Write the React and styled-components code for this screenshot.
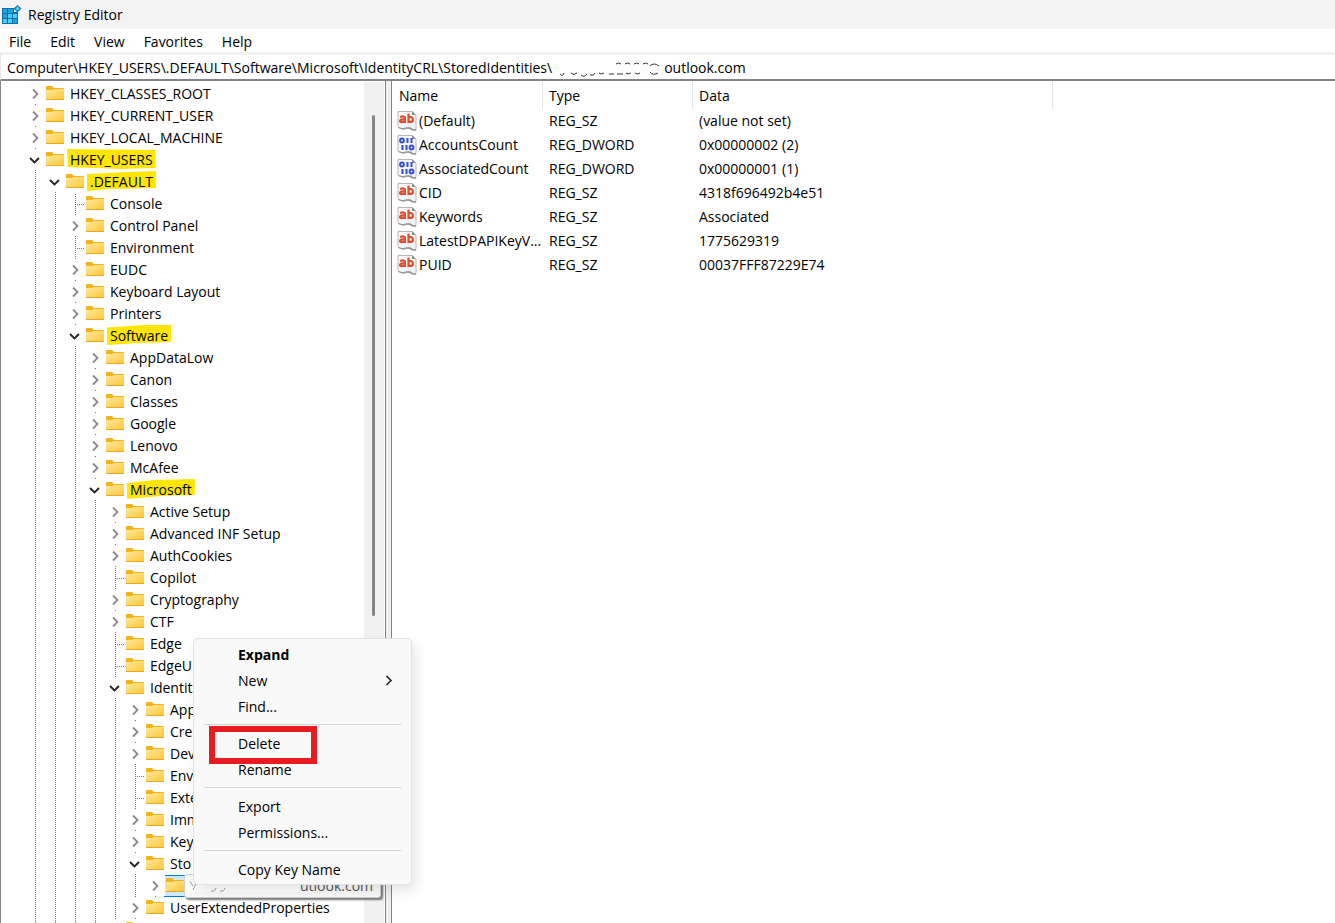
import styled, { createGlobalStyle } from "styled-components";

const GlobalStyle = createGlobalStyle`
  *, *::before, *::after {
    box-sizing: border-box;
  }
  body {
    margin: 0;
    background: #fff;
    color: #000;
    font-family: "Open Sans", "Segoe UI", sans-serif;
    font-size: 14px;
    line-height: 20px;
  }
  button, input {
    font: inherit;
    color: inherit;
  }
`

const menus = ["File", "Edit", "View", "Favorites", "Help"]

const keys = [
  { level: 0, name: "HKEY_CLASSES_ROOT", state: "closed" },
  { level: 0, name: "HKEY_CURRENT_USER", state: "closed" },
  { level: 0, name: "HKEY_LOCAL_MACHINE", state: "closed" },
  { level: 0, name: "HKEY_USERS", state: "open", marker: "0 0, 100% 5%, 100% 95%, 60% 100%, 1% 90%" },
  { level: 1, name: ".DEFAULT", state: "open", marker: "0 15%, 60% 5%, 100% 0, 100% 85%, 30% 90%, 0 100%" },
  { level: 2, name: "Console", state: "leaf" },
  { level: 2, name: "Control Panel", state: "closed" },
  { level: 2, name: "Environment", state: "leaf" },
  { level: 2, name: "EUDC", state: "closed" },
  { level: 2, name: "Keyboard Layout", state: "closed" },
  { level: 2, name: "Printers", state: "closed" },
  { level: 2, name: "Software", state: "open", marker: "0 12%, 60% 0, 100% 0, 100% 85%, 50% 90%, 0 100%" },
  { level: 3, name: "AppDataLow", state: "closed" },
  { level: 3, name: "Canon", state: "closed" },
  { level: 3, name: "Classes", state: "closed" },
  { level: 3, name: "Google", state: "closed" },
  { level: 3, name: "Lenovo", state: "closed" },
  { level: 3, name: "McAfee", state: "closed" },
  { level: 3, name: "Microsoft", state: "open", marker: "0 20%, 40% 5%, 100% 0, 100% 80%, 50% 85%, 0 100%" },
  { level: 4, name: "Active Setup", state: "closed" },
  { level: 4, name: "Advanced INF Setup", state: "closed" },
  { level: 4, name: "AuthCookies", state: "closed" },
  { level: 4, name: "Copilot", state: "leaf" },
  { level: 4, name: "Cryptography", state: "closed" },
  { level: 4, name: "CTF", state: "closed" },
  { level: 4, name: "Edge", state: "leaf" },
  { level: 4, name: "EdgeU", state: "leaf" },
  { level: 4, name: "Identit", state: "open" },
  { level: 5, name: "App", state: "closed" },
  { level: 5, name: "Cre", state: "closed" },
  { level: 5, name: "Dev", state: "closed" },
  { level: 5, name: "Env", state: "leaf" },
  { level: 5, name: "Exte", state: "leaf" },
  { level: 5, name: "Imm", state: "closed" },
  { level: 5, name: "Key", state: "closed" },
  { level: 5, name: "Sto", state: "open" },
  { level: 6, name: "", state: "closed", selected: true },
  { level: 5, name: "UserExtendedProperties", state: "closed" },
  { level: 4, name: "", state: "closed" },
]

const values = [
  { name: "(Default)", type: "REG_SZ", data: "(value not set)" },
  { name: "AccountsCount", type: "REG_DWORD", data: "0x00000002 (2)" },
  { name: "AssociatedCount", type: "REG_DWORD", data: "0x00000001 (1)" },
  { name: "CID", type: "REG_SZ", data: "4318f696492b4e51" },
  { name: "Keywords", type: "REG_SZ", data: "Associated" },
  { name: "LatestDPAPIKeyV...", type: "REG_SZ", data: "1775629319" },
  { name: "PUID", type: "REG_SZ", data: "00037FFF87229E74" },
]

const commands = [
  [{ label: "Expand", strong: true }, { label: "New", submenu: true }, { label: "Find..." }],
  [{ label: "Delete", boxed: true }, { label: "Rename" }],
  [{ label: "Export" }, { label: "Permissions..." }],
  [{ label: "Copy Key Name" }],
]

const AppIcon = () => (
  <svg width="20" height="20" viewBox="0 0 20 20" aria-hidden="true">
    <path d="M0 3h12v4h4v12H0z" fill="#0a6fa8" />
    <path d="M1 4h4v4H1zM6 4h5v4H6zM1 9h4v4H1zM11 14h4v4h-4z" fill="#1fa4dd" />
    <path d="M6 9h4v4H6zM11 9h4v4h-4zM1 14h4v4H1zM6 14h4v4H6z" fill="#50cdf5" />
    <path d="M15.500 0l4 3.500-4 4-4-4z" fill="#1480b8" />
    <path d="M15.500 1.500l2 2-2 2-2-2z" fill="#5fd0f5" />
  </svg>
)

const FolderIcon = () => (
  <svg width="18" height="16" viewBox="0 0 18 16" aria-hidden="true">
    <defs>
      <linearGradient id="folder" x1="0" y1="0" x2="1" y2="1">
        <stop offset="0" stopColor="#ffe8a0" />
        <stop offset="1" stopColor="#ffc83a" />
      </linearGradient>
    </defs>
    <path d="M0 1.500Q0 1 1 1h5l2 2h9q1 0 1 1v4H0z" fill="#f5b31a" />
    <path d="M0 5h6l2-1h10v10H0z" fill="url(#folder)" />
    <path d="M0 14h18v1H0z" fill="#e9a820" />
  </svg>
)

const Chevron = ({ open }) => (
  <ChevronIcon width="20" height="21" viewBox="0 0 20 21" aria-hidden="true">
    {open
      ? <path d="M5 9l4.500 4.500L14 9" stroke="#222" />
      : <path d="M8 6.500l4.500 4.500L8 15.500" stroke="#8a8a8a" />}
  </ChevronIcon>
)

const ValueIcon = ({ binary }) => (
  <svg width="20" height="20" viewBox="0 1 20 20" aria-hidden="true">
    <path d="M1 1.500h14l4 4v14l-3 0q-2-2-4-2t-4 1-4 0l-3-1z" fill="#f7f7f8" stroke="#b4b4b8" />
    <path d="M15 1v4h4z" fill="#8b8b90" />
    <path d="M2 17.500q3 2 6 1t5 0 3 1.500h3" fill="none" stroke="#98989c" strokeWidth="1.500" />
    {binary ? (
      <g fill="none" stroke="#2d4fd6" strokeWidth="2">
        <circle cx="5" cy="6.500" r="1.900" />
        <path d="M10.500 4v5M14.500 4v5M5.500 11v5M9.500 11v5" />
        <circle cx="14.500" cy="13.500" r="1.900" />
      </g>
    ) : (
      <g fill="none" stroke="#d9502e" strokeWidth="2.200">
        <path d="M3 7q5-1.500 5 1v5M8 9.500q-5-.5-5 1.500t5 .5" />
        <path d="M11.500 3.500v9.500M11.500 8q1-1.500 2.700-1t1.800 2.500-1.800 2.300-2.700-.5" />
      </g>
    )}
  </svg>
)

const App = () => {
  return (
    <Window>
      <GlobalStyle />
      <TitleBar>
        <AppIcon />
        <span>Registry Editor</span>
      </TitleBar>
      <MenuBar>
        {menus.map((menu) => <MenuButton key={menu}>{menu}</MenuButton>)}
      </MenuBar>
      <AddressBar>
        <AddressInput
          aria-label="Address"
          readOnly
          value={"Computer\\HKEY_USERS\\.DEFAULT\\Software\\Microsoft\\IdentityCRL\\StoredIdentities\\" + "\u2003".repeat(8) + "outlook.com"}
        />
        <AddressSmudge width="104" height="16" viewBox="0 0 104 16" aria-hidden="true">
          <path d="M3 12q3 3 4-1M14 11q3 3 6 0M24 13q3 3 6-1M33 13q4 1 5-2M42 11q2 2 5 0M52 12h5M59 2q3-2 5 0M68 2q3-2 5 0M77 2q3-2 5 0M86 2q3-2 5 0M60 12h6M69 11q2 2 5 0M78 11q2 2 5 0M93 4q4-4 9 0M93 10q3 4 8 1" />
        </AddressSmudge>
      </AddressBar>
      <Body>
        <TreePane>
          <Tree>
            {keys.map((item, i) => (
              <TreeRow key={i}>
                {Array.from({ length: item.level }, (_, n) => <Guide key={n} />)}
                <Guide $leaf={item.state === "leaf"}>
                  {item.state !== "leaf" && <Chevron open={item.state === "open"} />}
                </Guide>
                <FolderCell $selected={item.selected}><FolderIcon /></FolderCell>
                <KeyLabel $marker={item.marker}>{item.name}</KeyLabel>
              </TreeRow>
            ))}
          </Tree>
          <ScrollTrack><ScrollThumb /></ScrollTrack>
        </TreePane>
        <Splitter />
        <ListPane>
          <ValueTable>
            <colgroup>
              <Col $width={151} />
              <Col $width={150} />
              <Col $width={360} />
              <col />
            </colgroup>
            <thead>
              <tr>
                <HeadCell>Name</HeadCell>
                <HeadCell>Type</HeadCell>
                <HeadCell>Data</HeadCell>
                <td />
              </tr>
            </thead>
            <tbody>
              {values.map((value) => (
                <tr key={value.name}>
                  <Cell>
                    <ValueName>
                      <ValueIcon binary={value.type === "REG_DWORD"} />
                      {value.name}
                    </ValueName>
                  </Cell>
                  <Cell>{value.type}</Cell>
                  <Cell>{value.data}</Cell>
                  <td />
                </tr>
              ))}
            </tbody>
          </ValueTable>
        </ListPane>
        <Tooltip>
          <TipSmudge width="112" height="16" viewBox="0 0 112 16" aria-hidden="true">
            <path d="M0 2h112v12H0z" fill="#fff" stroke="none" />
            <path d="M2 3l3 5M9 3l-4 9M13 4q3 4 6 0M23 13q4 1 5-3M32 13q4 1 5-3M34 5h6M45 4h4M54 4h5M64 4h5M74 4h5M84 3h4M94 3h5M104 3h6" />
          </TipSmudge>
          utlook.com
        </Tooltip>
        <ContextMenu>
          {commands.map((group, i) => (
            <CommandGroup key={i}>
              {group.map((command) => (
                <Command key={command.label} $strong={command.strong} $boxed={command.boxed}>
                  {command.label}
                  {command.submenu && (
                    <svg width="8" height="12" viewBox="0 0 8 12" aria-hidden="true">
                      <path d="M1.500 1L6 5.500 1.500 10" fill="none" stroke="#222" strokeWidth="1.600" />
                    </svg>
                  )}
                </Command>
              ))}
            </CommandGroup>
          ))}
        </ContextMenu>
      </Body>
    </Window>
  )
}
export default App;

const Window = styled.main`
  display: flex;
  flex-direction: column;
  height: 100vh;
  overflow: hidden;
`

const TitleBar = styled.header`
  display: flex;
  align-items: center;
  gap: 6px;
  height: 29px;
  padding-left: 2px;
  background: #f3f3f3;
  flex-shrink: 0;
`

const MenuBar = styled.nav`
  display: flex;
  gap: 1px;
  height: 26px;
  border-bottom: 3px solid #f0f0f0;
  flex-shrink: 0;
`

const MenuButton = styled.button`
  padding: 2px 9px 0;
  border: 0;
  background: none;
`

const AddressBar = styled.div`
  position: relative;
  display: flex;
  height: 26px;
  border-left: 1px solid #e4e4e4;
  border-bottom: 2px solid #838389;
  flex-shrink: 0;
`

const AddressInput = styled.input`
  flex: 1;
  min-width: 0;
  padding: 2px 6px 0;
  border: 0;
  outline: 0;
  background: none;
`

const AddressSmudge = styled.svg`
  position: absolute;
  left: 556px;
  top: 7px;
  fill: none;
  stroke: #333;
`

const Body = styled.div`
  position: relative;
  display: flex;
  flex: 1;
  min-height: 0;
`

const TreePane = styled.section`
  display: flex;
  flex: 0 0 386px;
  border-left: 1px solid #838389;
  border-right: 1px solid #838389;
`

const Tree = styled.div`
  flex: 1;
  padding: 2px 0 0 24px;
  overflow: hidden;
`

const TreeRow = styled.div`
  display: flex;
  align-items: center;
  height: 22px;
`

// one 20px column per level, with the dotted line down its middle
const Guide = styled.span`
  position: relative;
  flex: 0 0 20px;
  height: 22px;
  background: repeating-linear-gradient(to bottom, #fff 0 1px, #777 1px 2px) 10px 0 / 1px 100% no-repeat;

  &::after {
    content: "";
    display: ${({ $leaf }) => ($leaf ? "block" : "none")};
    height: 1px;
    margin: 11px 0 0 12px;
    background: repeating-linear-gradient(to right, #777 0 1px, #fff 1px 2px);
  }
`

const ChevronIcon = styled.svg`
  display: block;
  background: #fff;
  fill: none;
  stroke-width: 1.8;
`

const FolderCell = styled.span`
  display: flex;
  align-items: center;
  justify-content: center;
  flex: 0 0 22px;
  height: 22px;
  margin: 0 4px 0 -1px;
  padding-bottom: 2px;
  border: 1px solid ${({ $selected }) => ($selected ? "#0078d4" : "transparent")};
  background: ${({ $selected }) => ($selected ? "#cce8ff" : "none")};
`

const KeyLabel = styled.span`
  position: relative;
  z-index: 0;
  white-space: nowrap;

  &::before {
    content: "";
    display: ${({ $marker }) => ($marker ? "block" : "none")};
    position: absolute;
    z-index: -1;
    inset: -1px -3px 1px;
    background: #ffe600;
    clip-path: polygon(${({ $marker }) => $marker});
  }
`

const ScrollTrack = styled.div`
  flex: 0 0 20px;
  margin: 1px 1px 0 0;
  padding: 33px 0 0 8px;
  background: #f0f0f0;
`

const ScrollThumb = styled.div`
  width: 3px;
  height: 62%;
  border-radius: 2px;
  background: #858585;
`

const Splitter = styled.div`
  flex: 0 0 5px;
  background: #f0f0f0;
`

const ListPane = styled.section`
  flex: 1;
  min-width: 0;
  border-left: 1px solid #838389;
`

const ValueTable = styled.table`
  width: 100%;
  table-layout: fixed;
  border-collapse: separate;
  border-spacing: 0;
  margin-top: 1px;
`

const Col = styled.col`
  width: ${({ $width }) => $width}px;
`

const HeadCell = styled.th`
  height: 27px;
  padding: 0 6px;
  border-right: 1px solid #e5e5e5;
  font-weight: 400;
  text-align: left;

  &:first-child {
    padding-left: 7px;
  }
`

const Cell = styled.td`
  height: 24px;
  padding: 0 0 0 6px;
  white-space: nowrap;

  &:first-child {
    padding-left: 5px;
  }
`

const ValueName = styled.span`
  display: flex;
  align-items: center;
  gap: 2px;
`

const Tooltip = styled.div`
  position: absolute;
  left: 184px;
  top: 793px;
  display: flex;
  align-items: center;
  height: 24px;
  padding: 0 7px 0 3px;
  border: 1px solid #d0d0d0;
  border-radius: 3px;
  background: #f9f9f9;
  box-shadow: 2px 2px 2px #777;
  color: #575757;
`

const TipSmudge = styled.svg`
  fill: none;
  stroke: #999;
`

const ContextMenu = styled.div`
  position: absolute;
  left: 193px;
  top: 557px;
  width: 219px;
  padding: 3px 0 1px;
  border: 1px solid #e2e2e2;
  border-radius: 5px;
  background: #f9f9f9;
  box-shadow: 4px 6px 12px rgba(0, 0, 0, 0.1);
`

const CommandGroup = styled.div`
  & + &::before {
    content: "";
    display: block;
    height: 1px;
    margin: 4px 10px 6px;
    background: #d4d4d4;
  }
`

const Command = styled.button`
  position: relative;
  display: flex;
  align-items: center;
  justify-content: space-between;
  width: 100%;
  height: 26px;
  padding: 0 18px 0 44px;
  border: 0;
  background: none;
  font-weight: ${({ $strong }) => ($strong ? 700 : 400)};

  &::after {
    content: "";
    display: ${({ $boxed }) => ($boxed ? "block" : "none")};
    position: absolute;
    z-index: 1;
    left: 15px;
    top: -5px;
    width: 108px;
    height: 38px;
    border: 6px solid #e81b1f;
  }
`
